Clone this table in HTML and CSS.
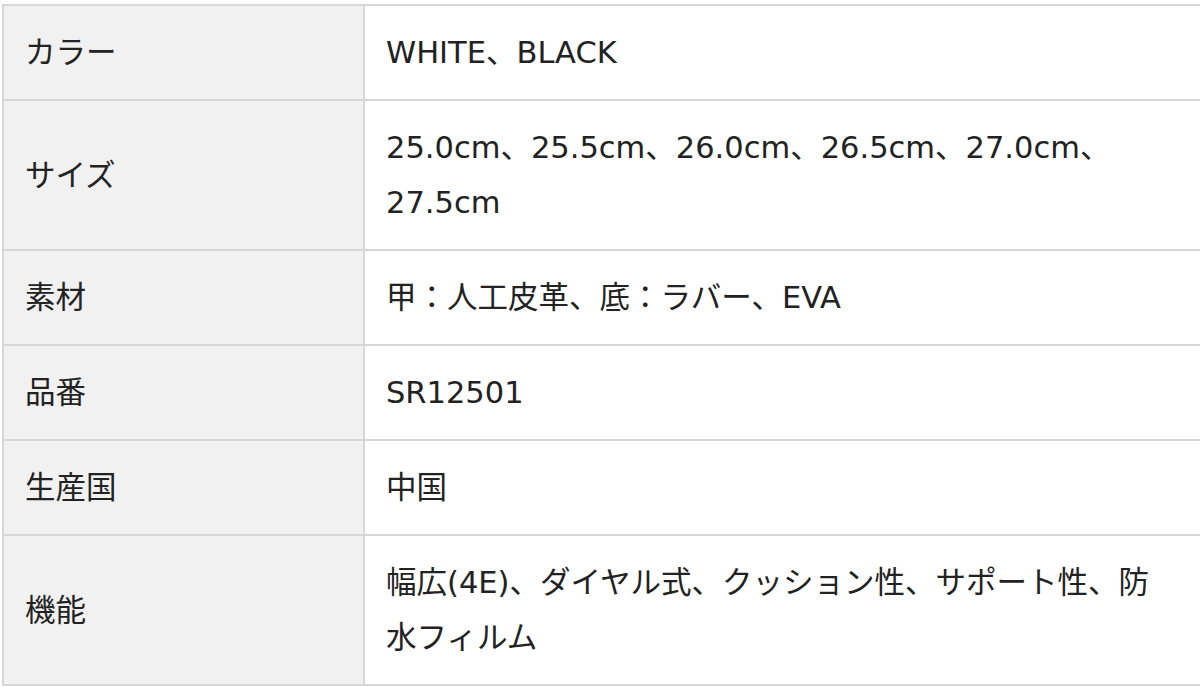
FILE: index.html
```html
<!DOCTYPE html>
<html lang="ja">
<head>
<meta charset="utf-8">
<link rel="stylesheet" href="styles.css">
</head>
<body>
<table class="spec">
  <tr><th>カラー</th><td>WHITE、BLACK</td></tr>
  <tr class="two"><th>サイズ</th><td>25.0cm、25.5cm、26.0cm、26.5cm、27.0cm、<br>27.5cm</td></tr>
  <tr><th>素材</th><td>甲：人工皮革、底：ラバー、EVA</td></tr>
  <tr><th>品番</th><td>SR12501</td></tr>
  <tr><th>生産国</th><td>中国</td></tr>
  <tr class="two"><th>機能</th><td>幅広(4E)、ダイヤル式、クッション性、サポート性、防水フィルム</td></tr>
</table>
</body>
</html>
```
FILE: styles.css
```css
html, body {
  margin: 0;
  padding: 0;
  overflow: hidden;
  background: #ffffff;
}
body {
  padding: 4px 0 0 2px;
  font-family: "DejaVu Sans", "Noto Sans CJK JP", sans-serif;
  color: #222222;
}
.spec {
  border-collapse: collapse;
  width: 1230px;
  table-layout: fixed;
}
.spec th, .spec td {
  border: 2px solid #d6d6d6;
  font-size: 30.5px;
  line-height: 55px;
  font-weight: normal;
  text-align: left;
  vertical-align: middle;
  padding: 19px 0 19px 21px;
}
.spec th {
  width: 338px;
  background: #f1f1f1;
}
.spec td {
  padding-right: 60px;
  background: #ffffff;
}
```
